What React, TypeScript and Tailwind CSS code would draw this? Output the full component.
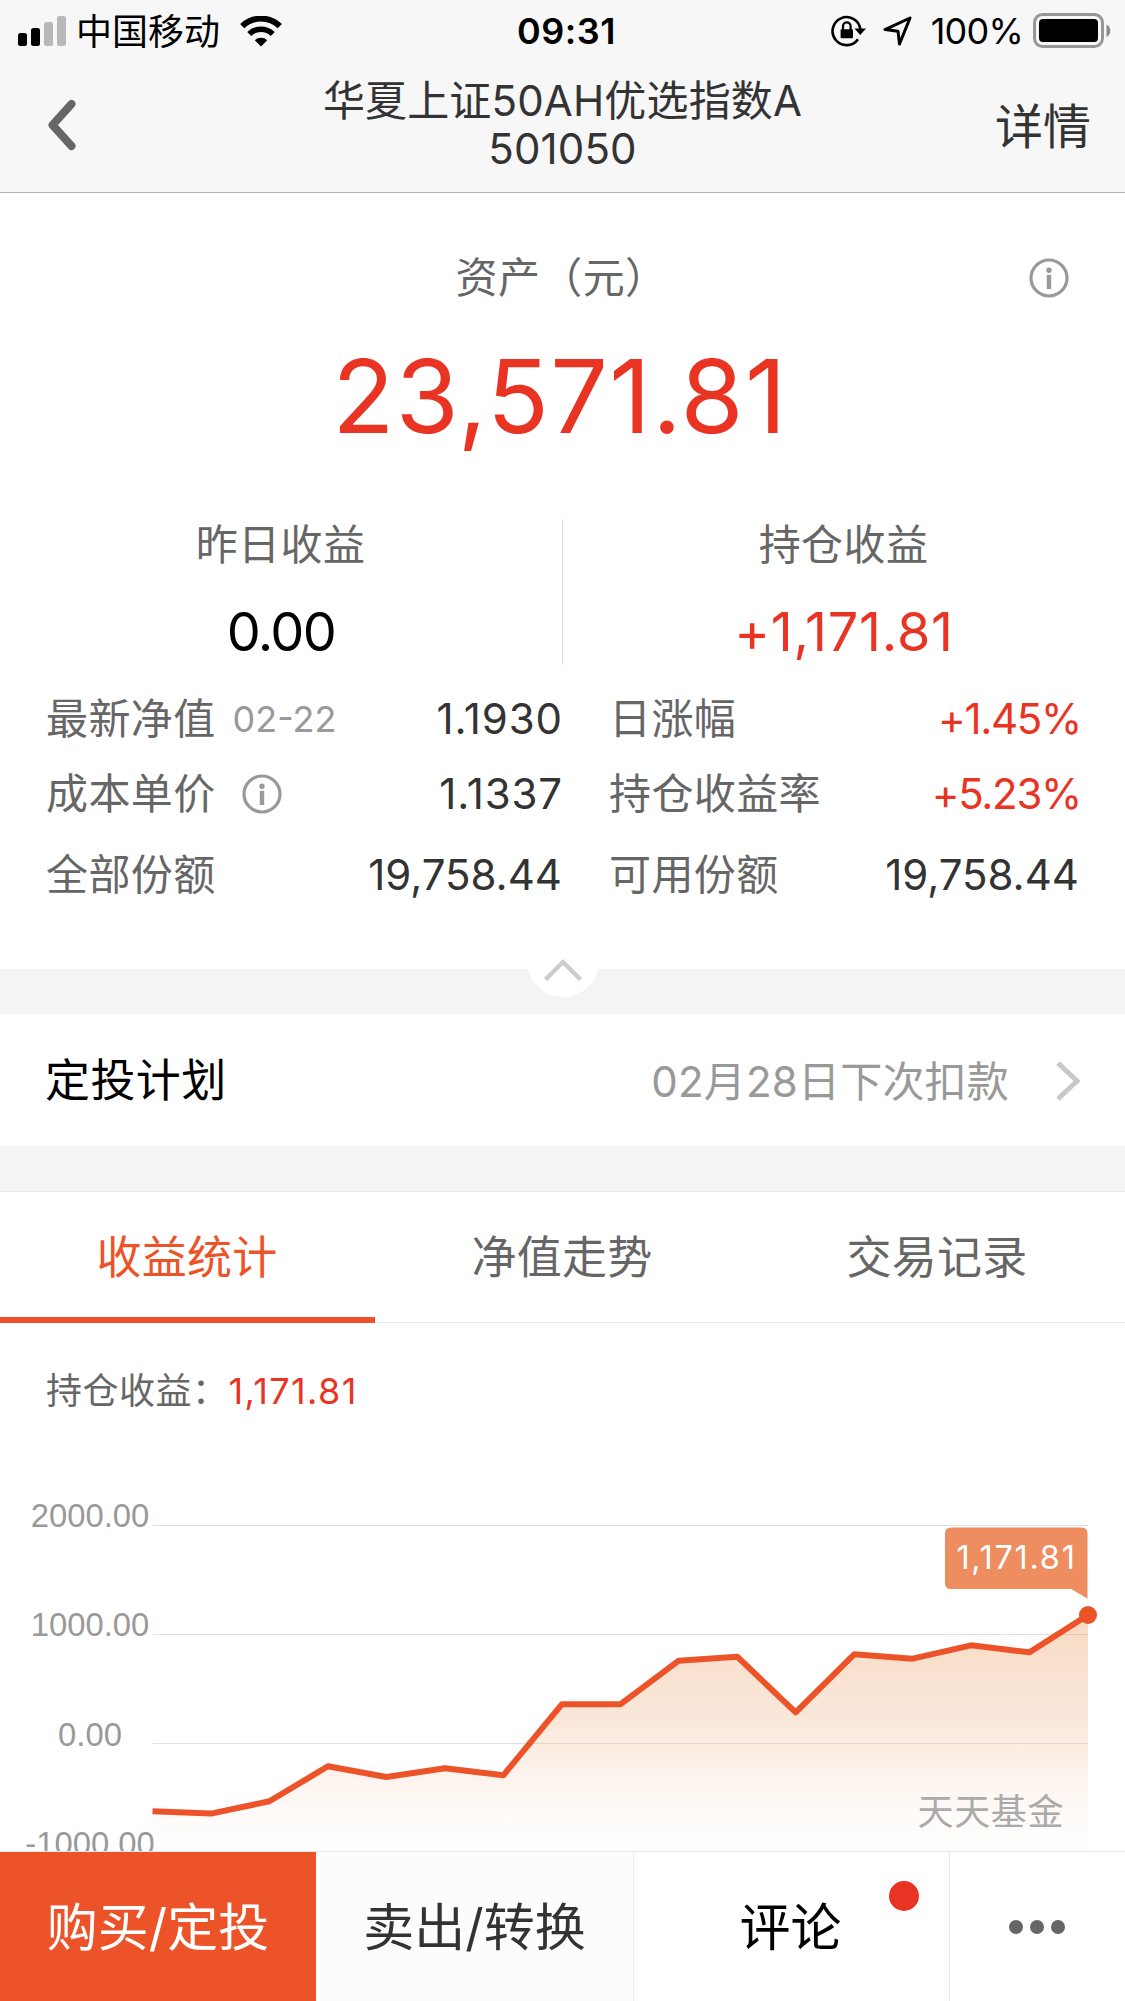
import { ReactNode } from 'react';

interface Cell {
  label: string;
  value: string;
  valueClass: string;
  date?: string;
  info?: boolean;
}

const rows: { height: string; left: Cell; right: Cell }[] = [
  {
    height: 'h-[74px]',
    left: { label: '最新净值', date: '02-22', value: '1.1930', valueClass: '-mr-px tracking-[0.9px] text-[#333]' },
    right: { label: '日涨幅', value: '+1.45%', valueClass: '-mr-[2px] tracking-[-1.3px] text-[#e93323]' },
  },
  {
    height: 'h-[76px]',
    left: { label: '成本单价', info: true, value: '1.1337', valueClass: '-mr-px tracking-[0.9px] text-[#333]' },
    right: { label: '持仓收益率', value: '+5.23%', valueClass: '-mr-[2px] tracking-[-1.3px] text-[#e93323]' },
  },
  {
    height: 'h-[86px]',
    left: { label: '全部份额', value: '19,758.44', valueClass: 'text-[#333]' },
    right: { label: '可用份额', value: '19,758.44', valueClass: 'text-[#333]' },
  },
];

const tabs = ['收益统计', '净值走势', '交易记录'];

// y positions inside the chart svg, one per trading day
const points = [
  311.3, 313.6, 301.3, 266.3, 277, 268.3, 275.3, 204.3, 204.3, 160.7, 156.7, 212.3, 154.3, 158.7, 145.3, 152.3, 115,
];
const LEFT = 152.5;
const STEP = 58.47;
const line = points.map((y, i) => `${LEFT + i * STEP},${y}`).join(' ');

const axis = [
  { label: '2000.00', y: 25.5, textY: 27 },
  { label: '1000.00', y: 134.5, textY: 136 },
  { label: '0.00', y: 243.5, textY: 246 },
  { label: '-1000.00', y: 352.5, textY: 354.5 },
];

function InfoIcon() {
  return (
    <svg width="40" height="40" viewBox="0 0 40 40" fill="none">
      <circle cx="20" cy="20" r="18" stroke="#999" strokeWidth="3.2" />
      <circle cx="20" cy="12.3" r="2.7" fill="#999" />
      <path d="M20 16.8V31" stroke="#999" strokeWidth="4.4" />
    </svg>
  );
}

function StatusBar() {
  return (
    <div className="grid h-[62px] grid-cols-3 items-center text-[36px] leading-[62px] text-black">
      <div className="flex items-center pl-[18px]">
        <svg width="49" height="30" viewBox="0 0 49 30">
          <rect x="0" y="17" width="9" height="13" rx="2.5" />
          <rect x="13" y="12" width="9" height="18" rx="2.5" />
          <rect x="26" y="6" width="9" height="24" rx="2.5" fill="#b8b8b8" />
          <rect x="39" y="0" width="9" height="30" rx="2.5" fill="#b8b8b8" />
        </svg>
        <span className="ml-[9px] pt-[2px] leading-[60px]">中国移动</span>
        <svg className="ml-5" width="42" height="31" viewBox="0 0 42 31" fill="none" stroke="#000">
          <path d="M2.2 10.2A27 27 0 0 1 39.8 10.2" strokeWidth="6" />
          <path d="M9.2 18A17 17 0 0 1 32.8 18" strokeWidth="5.6" />
          <path d="M14.8 24.2a9 9 0 0 1 12.4 0L21 30.6z" fill="#000" stroke="none" />
        </svg>
      </div>
      <div className="pl-[8px] text-center font-semibold tracking-[0.5px]">09:31</div>
      <div className="flex items-center justify-end pr-[13px]">
        <svg width="36" height="34" viewBox="0 0 36 34" fill="none" stroke="#000">
          <path d="M27 25.2A14 14 0 1 1 29.4 15" strokeWidth="2.6" />
          <path d="M23.5 14.5H35L29.2 21z" fill="#000" stroke="none" />
          <rect x="9.6" y="15.2" width="12.4" height="9" rx="1" fill="#000" stroke="none" />
          <path d="M12 16v-3.8a3.8 3.8 0 0 1 7.6 0V16" strokeWidth="2.2" />
        </svg>
        <svg className="ml-4" width="30" height="32" viewBox="0 0 30 32" fill="none">
          <path d="M27 3L2 14.6l13 1.6L16.5 29z" stroke="#000" strokeWidth="3" strokeLinejoin="round" />
        </svg>
        <span className="ml-[18px] tracking-[-0.8px]">100%</span>
        <svg className="ml-[10px]" width="79" height="36" viewBox="0 0 79 36" fill="none">
          <rect x="1.5" y="1.5" width="68" height="32" rx="8" stroke="#979797" strokeWidth="3" />
          <rect x="6" y="6" width="59" height="23" rx="4" fill="#000" />
          <path d="M73.5 11.5c5 2 5 10.5 0 12.5z" fill="#8a8a8a" />
        </svg>
      </div>
    </div>
  );
}

function Header() {
  return (
    <header className="h-[193px] border-b border-[#b2b2b2] bg-[#f7f7f7]">
      <StatusBar />
      <div className="grid h-[126px] grid-cols-[200px_1fr_200px] items-center text-[#333]">
        <svg className="ml-[47px]" width="30" height="52" viewBox="0 0 30 52" fill="none">
          <path d="M24.5 5L5.5 26L24.5 47" stroke="#666" strokeWidth="8" strokeLinecap="round" strokeLinejoin="round" />
        </svg>
        <h1 className="text-center text-[42px] leading-[48px] tracking-[0.15px]">
          华夏上证50AH优选指数A
          <br />
          501050
        </h1>
        <span className="pt-[4px] pr-[34px] text-right text-[48px] leading-[48px]">详情</span>
      </div>
    </header>
  );
}

function Stat({ label, children }: { label: string; children: ReactNode }) {
  return (
    <div className="flex-1 text-center">
      <div className="pt-px pr-px text-[42px] leading-[50px] tracking-[0.4px] text-[#666]">{label}</div>
      <div className="mt-[33px] text-[54px] leading-[58px]">{children}</div>
    </div>
  );
}

function Row({ cell }: { cell: Cell }) {
  return (
    <div className="flex items-center">
      <span className="tracking-[0.4px] text-[#666]">{cell.label}</span>
      {cell.date && <span className="ml-[17px] text-[36px] text-[#999]">{cell.date}</span>}
      {cell.info && (
        <span className="ml-[26px]">
          <InfoIcon />
        </span>
      )}
      <span className={`ml-auto ${cell.valueClass}`}>{cell.value}</span>
    </div>
  );
}

function Assets() {
  return (
    <section className="h-[776px] pt-[60px]">
      <div className="grid grid-cols-[1fr_auto_1fr] items-center">
        <span className="col-start-2 pr-[2px] text-[42px] leading-[50px] tracking-[0.4px] text-[#666]">资产（元）</span>
        <span className="justify-self-end pr-[56px]">
          <InfoIcon />
        </span>
      </div>
      <div className="mt-[41px] pr-[5px] text-center text-[102px] leading-[104px] tracking-[1.3px] text-[#e93323]">
        23,571.81
      </div>
      <div className="mt-[71px] flex h-[146px]">
        <Stat label="昨日收益">
          <span className="tracking-[-1.6px] text-black">0.00</span>
        </Stat>
        <div className="w-px bg-[#ddd]" />
        <Stat label="持仓收益">
          <span className="tracking-[0.75px] text-[#e93323]">+1,171.81</span>
        </Stat>
      </div>
      <div className="mt-[17px] text-[42px] leading-[50px]">
        {rows.map((row) => (
          <div key={row.left.label} className={`grid grid-cols-[516px_470px] gap-x-[47px] pl-[46px] ${row.height}`}>
            <Row cell={row.left} />
            <Row cell={row.right} />
          </div>
        ))}
      </div>
    </section>
  );
}

function Collapse() {
  return (
    <div className="relative h-[45px] bg-[#f4f4f4]">
      <div className="absolute -top-[44px] left-1/2 flex h-[72px] w-[72px] -translate-x-1/2 items-center justify-center rounded-full bg-white">
        <svg className="mt-[18px]" width="40" height="24" viewBox="0 0 40 24" fill="none">
          <path d="M2.5 21.5L20 4L37.5 21.5" stroke="#ccc" strokeWidth="4.4" />
        </svg>
      </div>
    </div>
  );
}

function Chart() {
  return (
    <div className="relative h-[361px] overflow-hidden">
      <svg width="1125" height="361" viewBox="0 -10 1125 361" fill="none">
        <defs>
          <linearGradient id="area" x1="0" y1="115" x2="0" y2="352" gradientUnits="userSpaceOnUse">
            <stop offset="0" stopColor="#e9a263" stopOpacity="0.39" />
            <stop offset="0.54" stopColor="#ec9a66" stopOpacity="0.2" />
            <stop offset="1" stopColor="#fff" stopOpacity="0.1" />
          </linearGradient>
        </defs>
        {axis.map((a) => (
          <g key={a.label}>
            <path d={`M152.5 ${a.y}H1088`} stroke="#e1e1e1" />
            <text x="90" y={a.textY} textAnchor="middle" fontSize="32.8" fill="#999" className="font-['Liberation_Sans',sans-serif]">
              {a.label}
            </text>
          </g>
        ))}
        <polygon points={`${LEFT},352 ${line} 1088,352`} fill="url(#area)" />
        <polyline points={line} stroke="#ec5328" strokeWidth="6" strokeLinejoin="round" />
        <circle cx="1088" cy="115" r="9" fill="#ec5328" />
        <path d="M951 27.5H1081.5q6 0 6 6V98.5L1071 89H951q-6 0-6-6V33.5q0-6 6-6z" fill="#ee8d5f" />
      </svg>
      <span className="absolute top-[38px] left-[945px] w-[143px] text-center text-[32.5px] leading-[60px] tracking-[1.7px] text-white">
        1,171.81
      </span>
      <span className="absolute top-[297px] right-[61px] text-[36px] leading-[50px] tracking-[0.6px] text-[#aaa]">天天基金</span>
    </div>
  );
}

function BottomBar() {
  return (
    <nav className="grid h-[150px] grid-cols-[316px_317px_316px_176px] border-t border-[#e8e8e8] text-[51px]">
      <button className="bg-[#ec5328] pt-[3px] text-white">购买/定投</button>
      <button className="bg-[#fcfcff] pt-[3px] text-[#333]">卖出/转换</button>
      <button className="relative border-l border-[#ebebeb] pt-[3px] pr-[2px] text-black">
        评论
        <span className="absolute top-[29px] right-[30px] h-[30px] w-[30px] rounded-full bg-[#e93323]" />
      </button>
      <button className="flex items-center justify-center gap-[7px] border-l border-[#ebebeb] pr-[2px]">
        <span className="h-[14px] w-[14px] rounded-full bg-[#666]" />
        <span className="h-[14px] w-[14px] rounded-full bg-[#666]" />
        <span className="h-[14px] w-[14px] rounded-full bg-[#666]" />
      </button>
    </nav>
  );
}

export default function App() {
  return (
    <div className="flex h-[2001px] w-[1125px] flex-col overflow-hidden bg-white font-['Inter','Noto_Sans_CJK_SC',sans-serif]">
      <Header />
      <Assets />
      <Collapse />
      <div className="flex h-[132px] items-center pt-[2px] pr-[44px] pl-[45px]">
        <span className="text-[45px] tracking-[0.4px] text-black">定投计划</span>
        <span className="ml-auto text-[42px] tracking-[0.2px] text-[#999]">02月28日下次扣款</span>
        <svg className="ml-[46px]" width="26" height="42" viewBox="0 0 26 42" fill="none">
          <path d="M3 3L22 21L3 39" stroke="#c7c7cc" strokeWidth="5" />
        </svg>
      </div>
      <div className="h-[46px] border-b border-[#e9e9e9] bg-[#f4f4f4]" />
      <div className="grid h-[131px] grid-cols-3 text-center text-[45px] leading-[118px] tracking-[0.2px]">
        {tabs.map((tab, i) => (
          <div
            key={tab}
            className={
              i === 0
                ? 'border-b-[6px] border-[#ec5328] pt-[7px] pr-px text-[#ec5328]'
                : 'border-b border-[#e9e9e9] pt-[7px] pr-px text-[#666]'
            }
          >
            {tab}
          </div>
        ))}
      </div>
      <div className="h-[167px] pt-[43px] pl-[46px] text-[36px] leading-[50px]">
        <span className="tracking-[0.5px] text-[#666]">持仓收益：</span>
        <span className="tracking-[1.4px] text-[#e93323]">1,171.81</span>
      </div>
      <Chart />
      <BottomBar />
    </div>
  );
}
